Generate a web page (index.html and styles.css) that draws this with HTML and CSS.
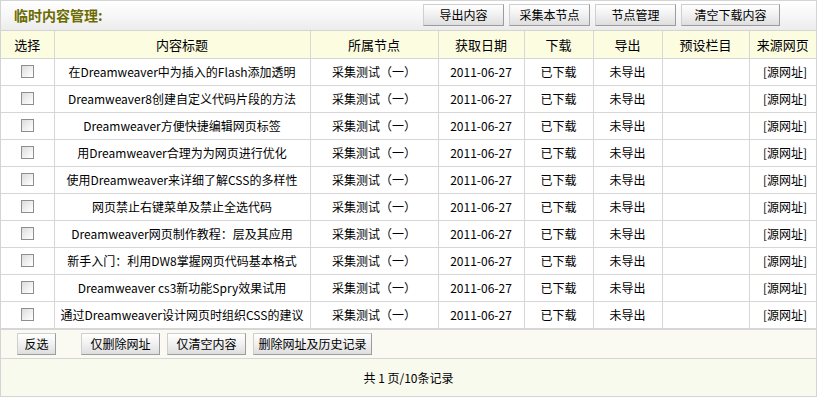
FILE: index.html
```html
<!DOCTYPE html>
<html lang="zh-CN">

<head>
    <meta charset="UTF-8">
    <meta name="viewport" content="width=device-width, initial-scale=1.0">
    <title>临时内容管理</title>

    <link rel="stylesheet" href="styles.css">
</head>

<body>
    <div class="panel">
        <div class="panel-head">
            <h2>临时内容管理:</h2>
            <div class="head-btns">
                <button type="button" class="btn w80">导出内容</button>
                <button type="button" class="btn w81">采集本节点</button>
                <button type="button" class="btn w80">节点管理</button>
                <button type="button" class="btn w99">清空下载内容</button>
            </div>
        </div>

        <table class="list">
            <colgroup>
                <col style="width:53px">
                <col style="width:256px">
                <col style="width:128px">
                <col style="width:86px">
                <col style="width:69px">
                <col style="width:69px">
                <col style="width:87px">
                <col>
            </colgroup>
            <thead>
                <tr>
                    <th>选择</th>
                    <th>内容标题</th>
                    <th>所属节点</th>
                    <th>获取日期</th>
                    <th>下载</th>
                    <th>导出</th>
                    <th>预设栏目</th>
                    <th>来源网页</th>
                </tr>
            </thead>
            <tbody>
                <tr>
                    <td><input type="checkbox" class="chk"></td>
                    <td>在Dreamweaver中为插入的Flash添加透明</td>
                    <td>采集测试（一）</td>
                    <td>2011-06-27</td>
                    <td>已下载</td>
                    <td>未导出</td>
                    <td></td>
                    <td class="src">[源网址]</td>
                </tr>
                <tr>
                    <td><input type="checkbox" class="chk"></td>
                    <td>Dreamweaver8创建自定义代码片段的方法</td>
                    <td>采集测试（一）</td>
                    <td>2011-06-27</td>
                    <td>已下载</td>
                    <td>未导出</td>
                    <td></td>
                    <td class="src">[源网址]</td>
                </tr>
                <tr>
                    <td><input type="checkbox" class="chk"></td>
                    <td>Dreamweaver方便快捷编辑网页标签</td>
                    <td>采集测试（一）</td>
                    <td>2011-06-27</td>
                    <td>已下载</td>
                    <td>未导出</td>
                    <td></td>
                    <td class="src">[源网址]</td>
                </tr>
                <tr>
                    <td><input type="checkbox" class="chk"></td>
                    <td>用Dreamweaver合理为为网页进行优化</td>
                    <td>采集测试（一）</td>
                    <td>2011-06-27</td>
                    <td>已下载</td>
                    <td>未导出</td>
                    <td></td>
                    <td class="src">[源网址]</td>
                </tr>
                <tr>
                    <td><input type="checkbox" class="chk"></td>
                    <td>使用Dreamweaver来详细了解CSS的多样性</td>
                    <td>采集测试（一）</td>
                    <td>2011-06-27</td>
                    <td>已下载</td>
                    <td>未导出</td>
                    <td></td>
                    <td class="src">[源网址]</td>
                </tr>
                <tr>
                    <td><input type="checkbox" class="chk"></td>
                    <td>网页禁止右键菜单及禁止全选代码</td>
                    <td>采集测试（一）</td>
                    <td>2011-06-27</td>
                    <td>已下载</td>
                    <td>未导出</td>
                    <td></td>
                    <td class="src">[源网址]</td>
                </tr>
                <tr>
                    <td><input type="checkbox" class="chk"></td>
                    <td>Dreamweaver网页制作教程：层及其应用</td>
                    <td>采集测试（一）</td>
                    <td>2011-06-27</td>
                    <td>已下载</td>
                    <td>未导出</td>
                    <td></td>
                    <td class="src">[源网址]</td>
                </tr>
                <tr>
                    <td><input type="checkbox" class="chk"></td>
                    <td>新手入门：利用DW8掌握网页代码基本格式</td>
                    <td>采集测试（一）</td>
                    <td>2011-06-27</td>
                    <td>已下载</td>
                    <td>未导出</td>
                    <td></td>
                    <td class="src">[源网址]</td>
                </tr>
                <tr>
                    <td><input type="checkbox" class="chk"></td>
                    <td>Dreamweaver cs3新功能Spry效果试用</td>
                    <td>采集测试（一）</td>
                    <td>2011-06-27</td>
                    <td>已下载</td>
                    <td>未导出</td>
                    <td></td>
                    <td class="src">[源网址]</td>
                </tr>
                <tr>
                    <td><input type="checkbox" class="chk"></td>
                    <td>通过Dreamweaver设计网页时组织CSS的建议</td>
                    <td>采集测试（一）</td>
                    <td>2011-06-27</td>
                    <td>已下载</td>
                    <td>未导出</td>
                    <td></td>
                    <td class="src">[源网址]</td>
                </tr>
            </tbody>
        </table>

        <div class="panel-actions">
            <button type="button" class="btn w39">反选</button>
            <button type="button" class="btn w79 gap-l">仅删除网址</button>
            <button type="button" class="btn w79">仅清空内容</button>
            <button type="button" class="btn w119">删除网址及历史记录</button>
        </div>

        <div class="panel-foot">共 1 页/10条记录</div>
    </div>
</body>

</html>
```

FILE: styles.css
```css
/* 공통 */
* {
    box-sizing: border-box;
}

body {
    margin: 0;
    font-family: "Noto Sans CJK SC", "DejaVu Sans", sans-serif;
    font-size: 12px;
    color: #000;
    background: #fff;
}

h2,
table,
th,
td {
    margin: 0;
    padding: 0;
}

.btn {
    display: block;
    height: 22px;
    padding: 0;
    border: 1px solid #cfcfcf;
    border-right-color: #9c9c9c;
    border-bottom-color: #9c9c9c;
    background: linear-gradient(#ffffff, #f2f2f2 45%, #dedede);
    font-family: inherit;
    font-size: 12px;
    line-height: 20px;
    color: #000;
    text-align: center;
    cursor: pointer;
}

.w39 { width: 39px; }
.w79 { width: 79px; }
.w80 { width: 81px; }
.w81 { width: 81px; }
.w99 { width: 99px; }
.w119 { width: 119px; }

/* 세부 */
.panel {
    width: 817px;
    border: 1px solid #d4d4d4;
}

.panel-head {
    display: flex;
    align-items: center;
    justify-content: space-between;
    height: 30px;
    padding: 0 36px 1px 13px;
    border-bottom: 1px solid #d4d4d4;
    background: linear-gradient(#ffffff, #f7f7f7 50%, #ececec);
}

.panel-head h2 {
    font-size: 14px;
    font-weight: bold;
    color: #6b6b00;
    letter-spacing: 0;
}

.head-btns {
    display: flex;
    gap: 5px;
}

.list {
    width: 100%;
    border-collapse: collapse;
    table-layout: fixed;
}

.list th,
.list td {
    height: 27px;
    border: 1px solid #d6d6d6;
    text-align: center;
    font-weight: normal;
    white-space: nowrap;
    overflow: hidden;
}

.list tr:first-child th {
    border-top: 0;
}

.list th:first-child,
.list td:first-child {
    border-left: 0;
}

.list th:last-child,
.list td:last-child {
    border-right: 0;
}

.list th {
    background: #fcfce0;
    font-size: 13px;
}

.list td.src {
    text-align: right;
    padding-right: 9px;
}

.chk {
    -webkit-appearance: none;
    appearance: none;
    display: block;
    width: 13px;
    height: 13px;
    margin: 0 auto;
    border: 1px solid #8e8e8e;
    background: linear-gradient(135deg, #dcdcdc, #f6f6f6 70%, #ffffff);
    vertical-align: middle;
}

.panel-actions {
    display: flex;
    align-items: center;
    gap: 7px;
    height: 30px;
    padding: 0 0 0 16px;
    border-top: 1px solid #d6d6d6;
    border-bottom: 1px solid #d6d6d6;
    background: #fafaf2;
}

.panel-actions .gap-l {
    margin-left: 18px;
}

.panel-foot {
    height: 37px;
    line-height: 37px;
    background: #f8faee;
    text-align: center;
}
```
